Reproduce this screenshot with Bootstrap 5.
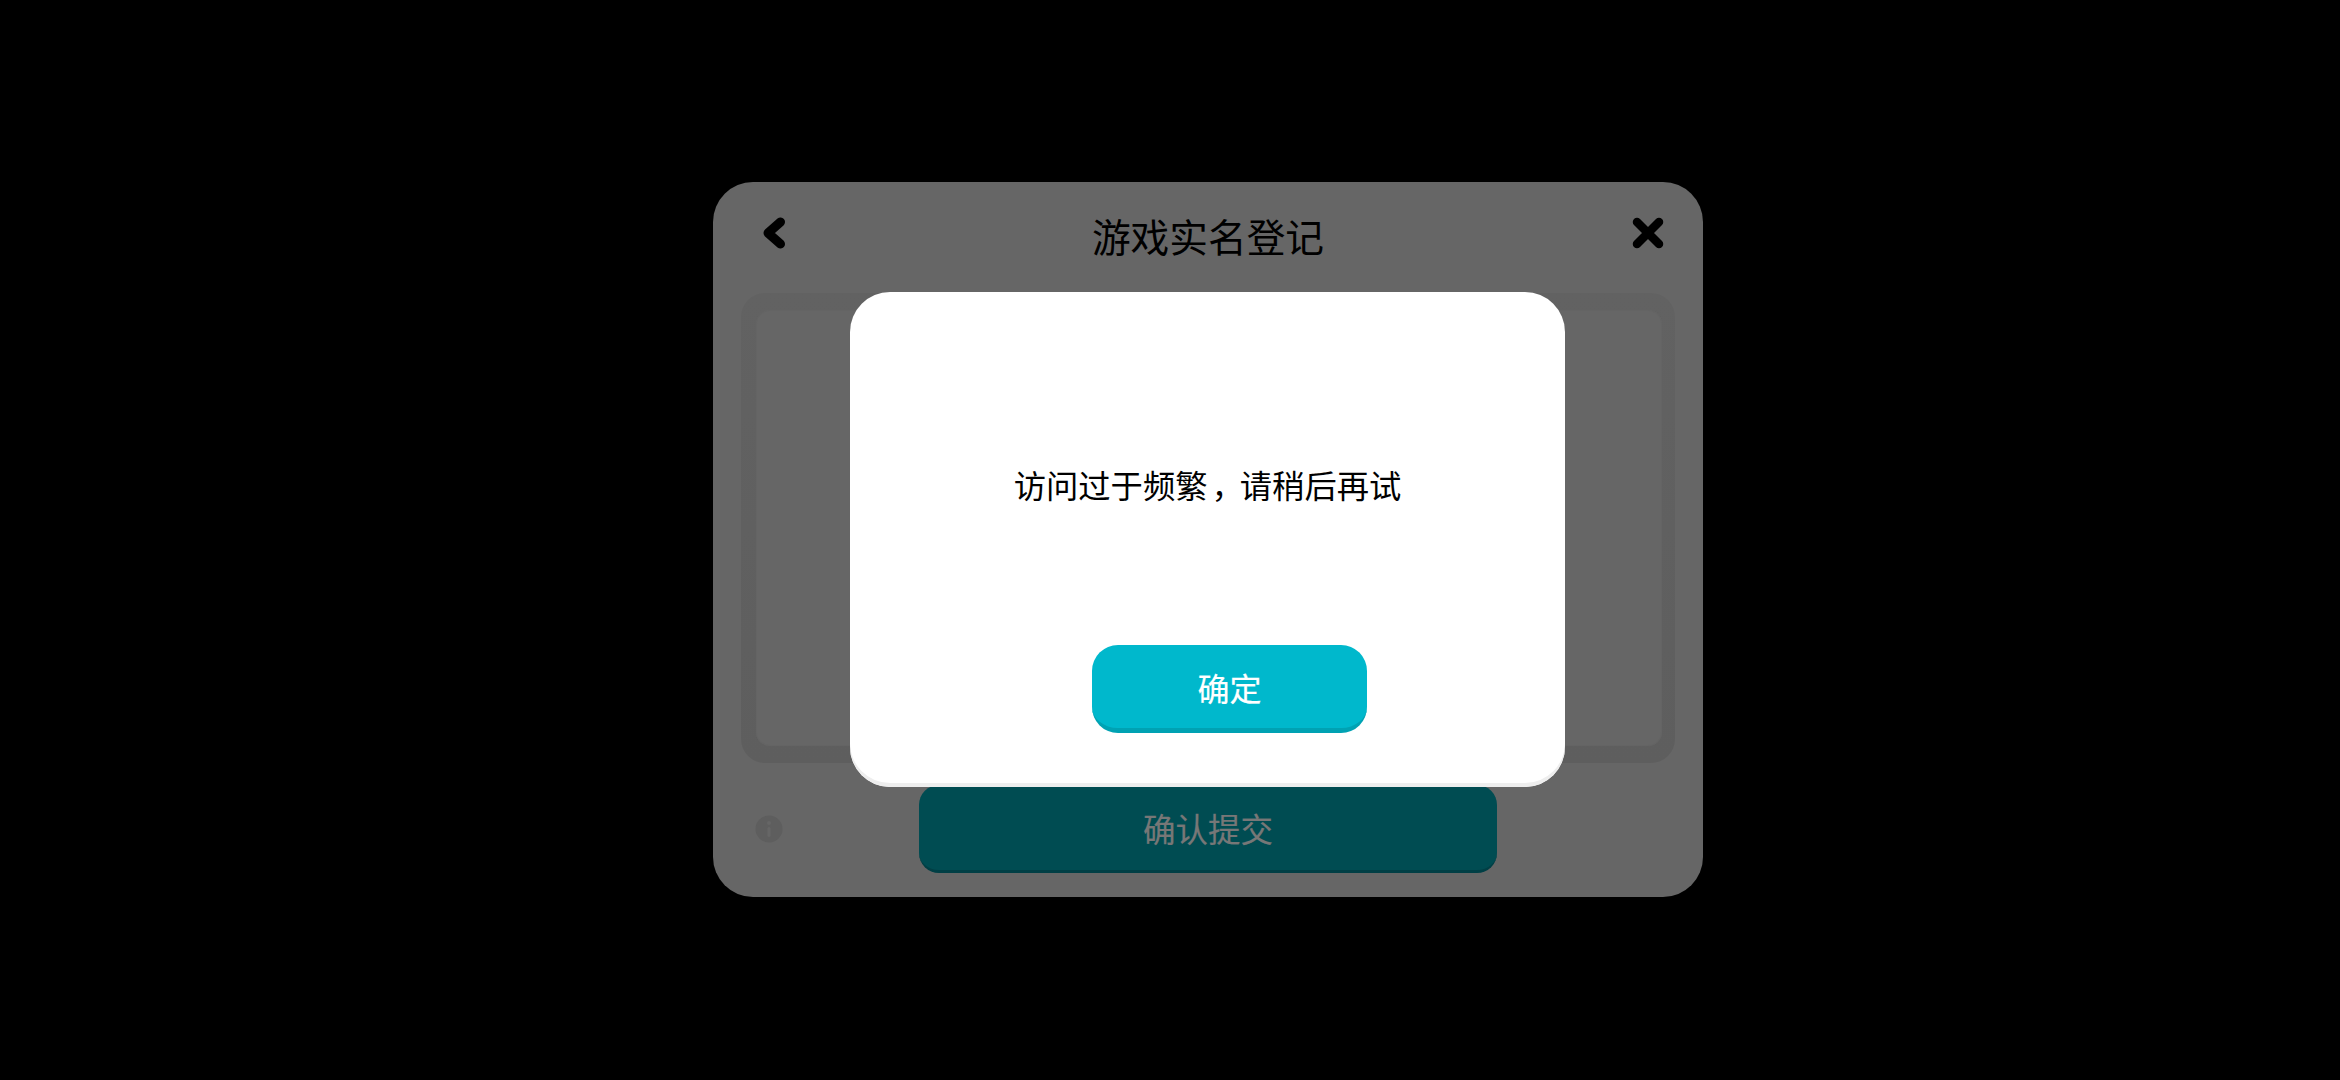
<!DOCTYPE html>
<html lang="zh-CN">
<head>
<meta charset="utf-8">
<title>游戏实名登记</title>
<link rel="stylesheet" href="https://cdn.jsdelivr.net/npm/bootstrap@5.3.0/dist/css/bootstrap.min.css">
<style>
html,body{height:100%;}
body{background:#000;font-family:"Noto Sans CJK SC","Liberation Sans",sans-serif;overflow:hidden;}
.stage{width:2340px;height:1080px;padding-top:182px;padding-left:713px;}
.sheet{width:990px;height:715px;background:#666;border-radius:40px;}
.head-row{height:111px;padding:35px 39px 0 48px;}
.head-title{font-size:38.7px;line-height:48px;color:#000;font-weight:400;margin:0;position:absolute;left:0;right:0;text-align:center;top:29px;}
.ico-back{width:24px;height:32px;display:block;}
.ico-close{width:32px;height:32px;display:block;}
.frame-outer{margin:0 28px;height:470px;background:linear-gradient(#626262,#5e5e5e);border-radius:24px;padding:17px 13px 17px 15px;}
.frame-inner{height:100%;background:#666;border-radius:14px;box-shadow:inset 0 0 0 1px #646464;}
.foot-row{height:134px;padding-left:42px;}
.ico-info{width:28px;height:28px;display:block;margin-top:52px;}
.submit-bar{width:578px;height:88px;margin-left:136px;margin-top:22px;background:#004c52;border-bottom:3px solid #003f45;border-radius:20px;color:#777;font-size:32.5px;-webkit-text-stroke:.2px #777;line-height:85px;text-align:center;}
.dialog-box{position:absolute;left:137px;top:110px;width:715px;height:495px;background:#fff;border-radius:40px;box-shadow:inset 0 -4px 0 #eee;}
.dialog-msg{height:352px;padding-top:168px;font-size:32.3px;line-height:48px;color:#000;text-align:center;}
.comma-nudge{margin-left:4px;letter-spacing:-4px;}
.dialog-ok{width:275px;height:88px;margin-left:242px;margin-top:1px;background:#00b8cc;border:0;border-bottom:5px solid #00a2b3;border-radius:26px;color:#fff;font-size:32px;-webkit-text-stroke:.2px #fff;line-height:85px;padding:0;display:block;}
</style>
</head>
<body>
<div class="stage">
  <div class="sheet position-relative">
    <div class="head-row d-flex justify-content-between align-items-start">
      <svg class="ico-back" viewBox="0 0 24 32"><path d="M19.5 5 L7 16 L19.5 27" fill="none" stroke="#000" stroke-width="9" stroke-linecap="round" stroke-linejoin="round"/></svg>
      <h1 class="head-title">游戏实名登记</h1>
      <svg class="ico-close" viewBox="0 0 32 32"><path d="M5 5 L27 27 M27 5 L5 27" fill="none" stroke="#000" stroke-width="8.5" stroke-linecap="round"/></svg>
    </div>
    <div class="frame-outer"><div class="frame-inner"></div></div>
    <div class="foot-row d-flex align-items-start">
      <svg class="ico-info flex-shrink-0" viewBox="0 0 28 28"><circle cx="14" cy="14" r="13.5" fill="#5e5e5e"/><circle cx="14" cy="8" r="2" fill="#666"/><rect x="12.5" y="12" width="3" height="10" rx="1.5" fill="#666"/></svg>
      <div class="submit-bar">确认提交</div>
    </div>
    <div class="dialog-box">
      <div class="dialog-msg">访问过于频繁<span class="comma-nudge">，</span>请稍后再试</div>
      <button type="button" class="btn dialog-ok">确定</button>
    </div>
  </div>
</div>
<script src="https://cdn.jsdelivr.net/npm/bootstrap@5.3.0/dist/js/bootstrap.bundle.min.js"></script>
</body>
</html>
